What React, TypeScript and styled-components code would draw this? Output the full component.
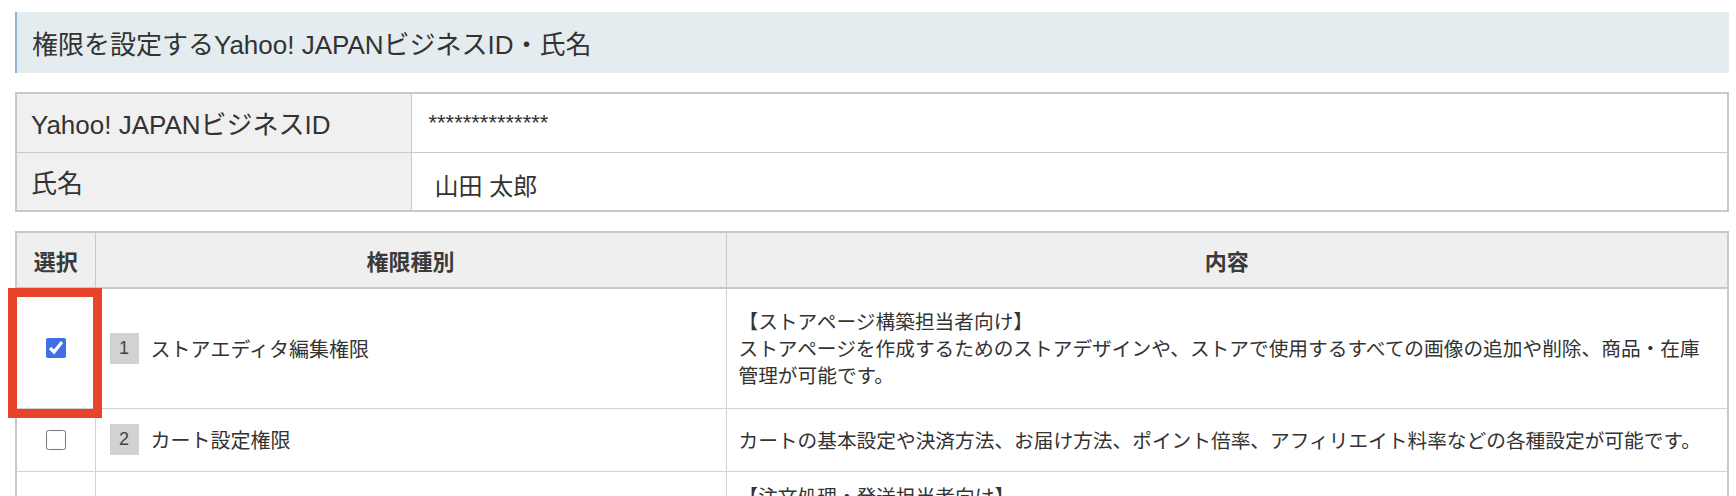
import React from 'react';
import styled, { createGlobalStyle } from 'styled-components';

const FONT = `"Liberation Sans", "Noto Sans CJK JP", sans-serif`;
const LINE = '#c9c9c9';
const TEXT = '#333333';

const GlobalStyle = createGlobalStyle`
  html, body {
    margin: 0;
    padding: 0;
    background: #ffffff;
  }
  body {
    font-family: ${FONT};
    color: ${TEXT};
  }
`;

const Page = styled.div`
  padding: 12px 7px 0 15px;
  display: flex;
  flex-direction: column;
`;

const SectionTitle = styled.h2`
  margin: 0;
  height: 61px;
  display: flex;
  align-items: center;
  padding-left: 15px;
  border-left: 2px solid #92b3d3;
  background: #e4ecef;
  font-size: 26px;
  font-weight: normal;
  color: ${TEXT};
`;

const InfoTable = styled.table`
  margin-top: 19px;
  width: 100%;
  border-collapse: collapse;
  border: 2px solid ${LINE};
`;

const InfoLabel = styled.th`
  width: 395px;
  height: 59px;
  padding: 0 0 0 14px;
  background: #f0f0f0;
  border: 1px solid ${LINE};
  text-align: left;
  font-size: 26px;
  font-weight: normal;
  box-sizing: border-box;
`;

const InfoValue = styled.td<{ $size: number; $shift?: number }>`
  padding: ${(p) => p.$shift ?? 0}px 0 0 ${(p) => (p.$shift ? 23 : 17)}px;
  border: 1px solid ${LINE};
  font-size: ${(p) => p.$size}px;
  background: #ffffff;
`;

const TableWrap = styled.div`
  position: relative;
  margin-top: 19px;
`;

const PermTable = styled.table`
  width: 100%;
  border-collapse: collapse;
  border: 2px solid ${LINE};
  table-layout: fixed;
`;

const HeadCell = styled.th<{ $width?: number }>`
  width: ${(p) => (p.$width ? `${p.$width}px` : 'auto')};
  height: 56px;
  padding: 0;
  background: #efefef;
  border: 1px solid ${LINE};
  border-bottom: 2px solid ${LINE};
  font-size: 22px;
  font-weight: bold;
  color: #3a3a3a;
  text-align: center;
  box-sizing: border-box;
`;

const Cell = styled.td<{ $height: number; $top?: boolean }>`
  height: ${(p) => p.$height}px;
  border: 1px solid #d3d3d3;
  vertical-align: ${(p) => (p.$top ? 'top' : 'middle')};
  padding: 0;
  box-sizing: border-box;
`;

const CheckCell = styled(Cell)`
  text-align: center;
`;

const Check = styled.input`
  width: 20px;
  height: 20px;
  margin: 0;
  accent-color: #3f6fe6;
  vertical-align: middle;
`;

const KindLabel = styled.div`
  display: flex;
  align-items: center;
  gap: 12px;
  padding-left: 14px;
  font-size: 20px;
`;

const Badge = styled.span`
  width: 29px;
  height: 31px;
  display: inline-flex;
  align-items: center;
  justify-content: center;
  background: #d2d2d2;
  color: #444;
  font-size: 18px;
`;

const Desc = styled.div<{ $top?: boolean }>`
  padding: ${(p) => (p.$top ? '12px 12px 0' : '3px 12px 0')};
  font-size: 19.7px;
  line-height: 27px;
`;

const Highlight = styled.div`
  position: absolute;
  left: -7px;
  top: 57px;
  width: 94px;
  height: 130px;
  border: 9px solid #e8432b;
  box-sizing: border-box;
  pointer-events: none;
`;

type Perm = {
  no: number;
  name: string;
  lines: string[];
  height: number;
  checked: boolean;
  top?: boolean;
};

const perms: Perm[] = [
  {
    no: 1,
    name: 'ストアエディタ編集権限',
    lines: [
      '【ストアページ構築担当者向け】',
      'ストアページを作成するためのストアデザインや、ストアで使用するすべての画像の追加や削除、商品・在庫',
      '管理が可能です。',
    ],
    height: 120,
    checked: true,
  },
  {
    no: 2,
    name: 'カート設定権限',
    lines: ['カートの基本設定や決済方法、お届け方法、ポイント倍率、アフィリエイト料率などの各種設定が可能です。'],
    height: 63,
    checked: false,
  },
  {
    no: 3,
    name: '注文管理権限',
    lines: [
      '【注文処理・発送担当者向け】',
      '注文の確認や処理、発送状況の管理、問い合わせへの対応が可能です。',
      'ストアの売上や注文データを確認できます。',
    ],
    height: 116,
    checked: false,
    top: true,
  },
];

const App: React.FC = () => {
  return (
    <>
      <GlobalStyle />
      <Page>
        <SectionTitle>権限を設定するYahoo! JAPANビジネスID・氏名</SectionTitle>

        <InfoTable>
          <tbody>
            <tr>
              <InfoLabel>Yahoo! JAPANビジネスID</InfoLabel>
              <InfoValue $size={22}>**************</InfoValue>
            </tr>
            <tr>
              <InfoLabel>氏名</InfoLabel>
              <InfoValue $size={24} $shift={6}>山田 太郎</InfoValue>
            </tr>
          </tbody>
        </InfoTable>

        <TableWrap>
          <PermTable>
            <thead>
              <tr>
                <HeadCell $width={79}>選択</HeadCell>
                <HeadCell $width={631}>権限種別</HeadCell>
                <HeadCell>内容</HeadCell>
              </tr>
            </thead>
            <tbody>
              {perms.map((p) => (
                <tr key={p.no}>
                  <CheckCell $height={p.height}>
                    <Check type="checkbox" defaultChecked={p.checked} />
                  </CheckCell>
                  <Cell $height={p.height}>
                    <KindLabel>
                      <Badge>{p.no}</Badge>
                      {p.name}
                    </KindLabel>
                  </Cell>
                  <Cell $height={p.height} $top={p.top}>
                    <Desc $top={p.top}>
                      {p.lines.map((l, i) => (
                        <React.Fragment key={i}>
                          {i > 0 && <br />}
                          {l}
                        </React.Fragment>
                      ))}
                    </Desc>
                  </Cell>
                </tr>
              ))}
            </tbody>
          </PermTable>
          <Highlight />
        </TableWrap>
      </Page>
    </>
  );
};

export default App;
